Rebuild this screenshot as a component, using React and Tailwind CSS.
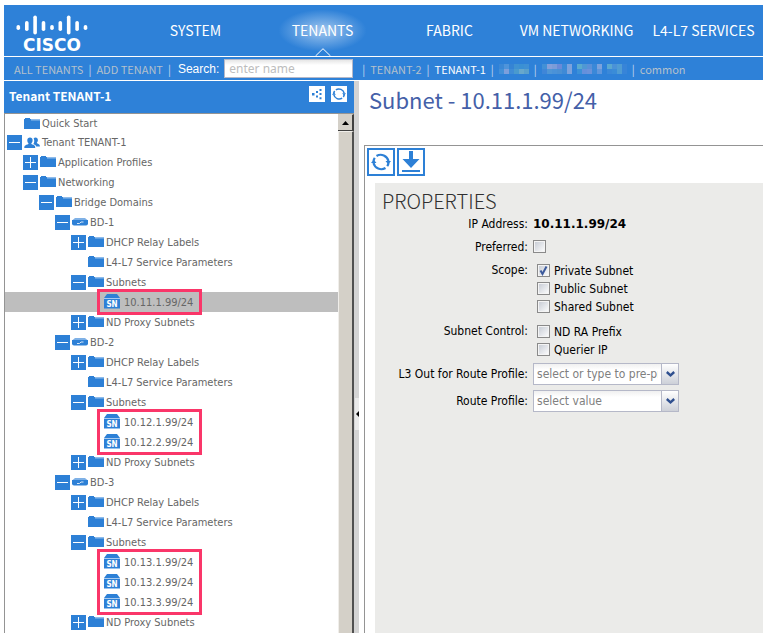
const CENTERED = "flex shrink-0 items-center justify-center";

function Folder() {
  return (
    <svg className="h-4 w-4 shrink-0" viewBox="0 0 16 16" aria-hidden="true" shapeRendering="crispEdges">
      <path d="M7 3h9v2H0V3z" fill="#8fbbea" />
      <path d="M1 2h5l1 2h9v9H0V3z" fill="#2d80d6" />
      <path d="M7 4h9v1H7z" fill="#5f9fe0" />
    </svg>
  );
}

function Users() {
  return (
    <svg className="h-4 w-4 shrink-0" viewBox="0 0 16 16" fill="#2d80d6" aria-hidden="true">
      <path d="M6 2.5c1.600 0 2.600 1.100 2.600 2.700 0 1.300-.5 2.300-1.200 2.900v.9c1 .6 3.100 1 3.600 2.100.2.500.2 1.400.2 1.900H.3c0-.6 0-1.400.3-1.900.6-1.100 2.800-1.500 3.800-2.100v-.9C3.700 7.500 3.300 6.500 3.300 5.200 3.300 3.600 4.400 2.500 6 2.500z" />
      <path d="M11.600 2.500c1.400 0 2.300 1 2.300 2.400 0 1.100-.4 2-1 2.500v.8c.8.500 2.300.8 2.700 1.700.2.400.3 1.100.3 1.600h-3.700c-.3-1.300-1.800-1.900-2.900-2.400.8-1.100 1-2.300.9-3.900-.1-.8-.3-1.300-.6-1.800.5-.6 1.200-.9 2-.9z" />
    </svg>
  );
}

function Bridge() {
  return (
    <svg className="h-4 w-4 shrink-0" viewBox="0 0 16 16" aria-hidden="true">
      <path d="M3 4h10l3 2.500H0z" fill="#7fb1e6" />
      <path d="M0 6h16v3.500a2 2 0 0 1-2 2H2a2 2 0 0 1-2-2z" fill="#2d80d6" />
      <path d="M5 9.500h2.500l1.500-1.500h2.500" stroke="#d5e6f8" strokeWidth="1" fill="none" />
    </svg>
  );
}

function SubnetIcon() {
  return (
    <svg className="h-4 w-4 shrink-0" viewBox="0 0 16 16" aria-hidden="true">
      <path d="M3 0h10l3 4H0z" fill="#2d80d6" />
      <path d="M0 4h16v1H0z" fill="#a8caef" />
      <path d="M0 5h16v9.500H0z" fill="#2d80d6" />
      <text x="8" y="13" textAnchor="middle" fontSize="8" fontWeight="700" fontFamily="DejaVu Sans Condensed, DejaVu Sans, sans-serif" fill="#fff">SN</text>
    </svg>
  );
}

function Refresh({ className }) {
  return (
    <svg className={className} viewBox="0 0 20 20" fill="none" stroke="#2d80d6" strokeWidth="2.200" aria-hidden="true">
      <path d="M5.500 4A8 8 0 0 1 17.500 9" />
      <path d="M14.500 16A8 8 0 0 1 2.500 11" />
      <path d="M3.800 5.800A7.500 7.500 0 0 0 2.500 9M16.200 14.200A7.500 7.500 0 0 0 17.500 11" />
      <path d="M14.500 9H20l-2.700 3.500zM0 11h5.500L2.700 7.500z" fill="#2d80d6" stroke="none" />
    </svg>
  );
}

const LOGO_BARS = [
  [0.5, 10, 5], [9, 6, 10], [17.3, 0.5, 19], [25.7, 6, 10], [34.2, 10, 5],
  [42.5, 6, 10], [50.9, 0.5, 19], [59.3, 6, 10], [67.7, 10, 5],
];

function CiscoLogo() {
  return (
    <a href="#home" className="flex w-[72px] flex-col items-center">
      <svg className="h-5 w-[72px]" viewBox="0 0 72 20" fill="#fff" aria-hidden="true">
        {LOGO_BARS.map(([x, y, h]) => (
          <rect key={x} x={x} y={y} width="3.600" height={h} rx="1.800" />
        ))}
      </svg>
      <span className="font-['DejaVu_Sans',sans-serif] text-[17px] font-bold leading-5">CISCO</span>
    </a>
  );
}

const ICONS = { folder: Folder, users: Users, bridge: Bridge, subnet: SubnetIcon };

const INDENT = [
  "pl-[2px]", "pl-[18px]", "pl-[34px]", "pl-[50px]", "pl-[66px]", "pl-[82px]",
];

function Toggle({ open, label }) {
  return (
    <button
      type="button"
      aria-expanded={open}
      aria-label={label}
      className="h-[15px] w-[15px] shrink-0 bg-[#2d80d6]"
    >
      <svg viewBox="0 0 15 15" stroke="#fff" className="block" aria-hidden="true">
        <path d="M2 7.500h11" />
        {!open && <path d="M7.500 2v11" />}
      </svg>
    </button>
  );
}

function Row({ level, icon = "folder", label, state, selected, short }) {
  const Icon = ICONS[icon];
  return (
    <div
      role="treeitem"
      aria-selected={!!selected}
      className={`flex items-center gap-[2px] whitespace-nowrap ${short ? "h-[19px]" : "h-5"} ${INDENT[level]} ${selected ? "bg-[#bebebe]" : ""}`}
    >
      {state ? (
        <Toggle open={state === "open"} label={`Toggle ${label}`} />
      ) : (
        <span className="w-[15px] shrink-0" />
      )}
      <Icon />
      <span className={`pt-[2px] ${icon === "subnet" ? "pl-[2px]" : ""}`}>{label}</span>
    </div>
  );
}

function Domain({ name, subnets, selected }) {
  return (
    <div role="group">
      <Row level={3} icon="bridge" label={name} state="open" />
      <Row level={4} label="DHCP Relay Labels" state="closed" />
      <Row level={4} label="L4-L7 Service Parameters" />
      <Row level={4} label="Subnets" state="open" />
      <div className="relative">
        {subnets.map((s) => (
          <Row key={s} level={5} icon="subnet" label={s} selected={s === selected} />
        ))}
        <div className="pointer-events-none absolute -bottom-[3px] -top-[3px] left-[92px] w-[105px] border-[3px] border-[#fa3669]" />
      </div>
      <Row level={4} label="ND Proxy Subnets" state="closed" />
    </div>
  );
}

function Check({ id, label, checked }) {
  return (
    <div className="flex h-[18px] items-center gap-[4px]">
      <span className="relative flex h-[13px] w-[13px]">
        <input
          id={id}
          type="checkbox"
          defaultChecked={checked}
          className="peer h-[13px] w-[13px] appearance-none border border-[#8a8a8a] bg-linear-to-br from-[#c4c9d2] to-white shadow-[inset_0_0_0_1px_#f4f4f4]"
        />
        <svg className="pointer-events-none absolute inset-0 hidden peer-checked:block" viewBox="0 0 13 13" fill="none" stroke="#3c5a9c" strokeWidth="2" aria-hidden="true">
          <path d="M3.500 6.500l2 3.500 4-7.500" />
        </svg>
      </span>
      {label && <label htmlFor={id} className="pt-px">{label}</label>}
    </div>
  );
}

function Combo({ id, placeholder }) {
  return (
    <div className="flex h-[22px] w-[146px] border border-[#b5b8c8] bg-white">
      <input
        id={id}
        type="text"
        placeholder={placeholder}
        className="w-0 min-w-0 flex-1 bg-linear-to-b from-[#f0f0f0] to-white to-30% px-[3px] outline-none placeholder:text-[#808080]"
      />
      <button
        type="button"
        aria-label="Open list"
        className={`${CENTERED} w-[17px] border-l border-[#b5b8c8] bg-linear-to-b from-white to-[#cdd0d8]`}
      >
        <svg className="h-[6px] w-[9px]" viewBox="0 0 9 6" fill="none" stroke="#2f4f8f" strokeWidth="2.400" aria-hidden="true">
          <path d="M.8 1l3.700 3.300L8.200 1" />
        </svg>
      </button>
    </div>
  );
}

const NAV = ["SYSTEM", "TENANTS", "FABRIC", "VM NETWORKING", "L4-L7 SERVICES"];

const MASK_A = [
  ["#3b88d6", "#4f94da", "#3584d4", "#3f92d2", "#3a90d4", "#3f90d4"],
  ["#4290d8", "#7c9fdc", "#3f8cd6", "#4a9ace", "#68a8cc", "#5aa0cc"],
];
const MASK_B = [
  ["#4290d6", "#849fda", "#7a9cd8", "#6a8ad8", "#3a8ad8", "#7ca2dc", "#2e81d8", "#5aaace", "#4f98d4", "#5a90d8", "#3a88d8", "#7ca2dc", "#2e81d8", "#5aa8d0", "#4a92d8", "#4f9cd4", "#3784d8"],
  ["#3f86d8", "#4f96d6", "#4a92d8", "#4a90d4", "#3f8ad6", "#7ca2dc", "#2e81d8", "#3a90d8", "#6490dc", "#6a92da", "#3a88d8", "#5f96dc", "#2e81d8", "#3a88d8", "#3a8cd8", "#4f9cd4", "#3784d8"],
];

function Masked({ rows }) {
  return (
    <span className="flex flex-col" aria-hidden="true">
      {rows.map((colors, r) => (
        <span key={r} className="flex">
          {colors.map((c, i) => (
            <span key={i} className="h-[5px] w-[5px]" style={{ backgroundColor: c }} />
          ))}
        </span>
      ))}
    </span>
  );
}

function Bar() {
  return <span className="text-[#c6d9ee]">|</span>;
}

export default function App() {
  return (
    <div className="flex h-screen flex-col overflow-hidden bg-white pl-1 pt-[5px] font-['DejaVu_Sans_Condensed','DejaVu_Sans',sans-serif] text-[11px] text-black">
      <header className="shrink-0 text-white">
        <div className="flex h-[51px] overflow-hidden bg-[#2e81d8]">
          <div className="w-32 shrink-0 pl-3 pt-[10px]">
            <CiscoLogo />
          </div>
          <nav className="flex font-['Noto_Sans_CJK_SC',sans-serif] text-[14px]">
            {NAV.map((n) => (
              <a
                key={n}
                href="#nav"
                className={`relative flex w-[127px] shrink-0 items-center justify-center whitespace-nowrap pb-px leading-5 ${n === "TENANTS" ? "bg-[radial-gradient(44px_21px_at_center,#a0c6ee,#2e81d8)]" : ""}`}
              >
                {n}
                {n === "TENANTS" && (
                  <svg className="absolute bottom-0 h-2 w-4" viewBox="0 0 16 8" fill="none" stroke="#fff" aria-hidden="true">
                    <path d="M.5 8L8 .7 15.500 8" />
                  </svg>
                )}
              </a>
            ))}
          </nav>
        </div>
        <div className="mt-px flex h-[23px] items-center gap-[5px] overflow-hidden whitespace-nowrap bg-[#2e81d8] pl-[10px] font-['Noto_Sans_CJK_SC',sans-serif] text-[11px] leading-4 text-[#b4c0cc]">
          <a href="#all">ALL TENANTS</a>
          <Bar />
          <a href="#add">ADD TENANT</a>
          <Bar />
          <label htmlFor="search" className="pl-[2px] font-['Liberation_Sans',sans-serif] text-[12px] text-white">
            Search:
          </label>
          <input
            id="search"
            type="text"
            placeholder="enter name"
            className="mr-1 h-[19px] w-[129px] shrink-0 border border-[#b5b8c8] bg-linear-to-b from-[#e6e6e6] to-white to-30% px-1 font-['Noto_Sans',sans-serif] text-[12px] text-black outline-none placeholder:text-[#bdbdbd]"
          />
          <Bar />
          <a href="#t2">TENANT-2</a>
          <Bar />
          <a href="#t1" className="text-white">TENANT-1</a>
          <Bar />
          <Masked rows={MASK_A} />
          <Bar />
          <Masked rows={MASK_B} />
          <Bar />
          <a href="#common">common</a>
        </div>
      </header>

      <div className="mt-px flex min-h-0 flex-1">
        <aside className="flex w-[350px] shrink-0 flex-col">
          <div className="flex h-8 shrink-0 items-center bg-[#2e81d8] pb-[2px] pl-[5px] pr-[7px]">
            <h2 className="flex-1 font-['Noto_Sans_CJK_SC',sans-serif] text-[12px] font-bold leading-5 text-white">
              Tenant TENANT-1
            </h2>
            <div className="flex gap-[6px] pb-1">
              <button type="button" aria-label="Topology" className={`${CENTERED} h-4 w-4 bg-white`}>
                <svg className="h-3 w-3" viewBox="0 0 12 12" fill="#2d80d6" aria-hidden="true">
                  <path d="M1 5h2.500v2.500H1zM5 3h2v2H5zM5 7.500h2v2H5zM8.500 1h2v2h-2zM8.500 5h2v2h-2zM8.500 9.300h2v2h-2z" />
                </svg>
              </button>
              <button type="button" aria-label="Refresh tree" className={`${CENTERED} h-4 w-4 bg-white`}>
                <Refresh className="h-[14px] w-[14px]" />
              </button>
            </div>
          </div>
          <div className="flex min-h-0 flex-1 border-l border-t border-[#949494]">
            <div role="tree" aria-label="Tenant objects" className="min-w-0 flex-1 overflow-hidden text-[#666666]">
              <Row level={0} label="Quick Start" short />
              <Row level={0} icon="users" label="Tenant TENANT-1" state="open" short />
              <Row level={1} label="Application Profiles" state="closed" />
              <Row level={1} label="Networking" state="open" />
              <Row level={2} label="Bridge Domains" state="open" />
              <Domain name="BD-1" subnets={["10.11.1.99/24"]} selected="10.11.1.99/24" />
              <Domain name="BD-2" subnets={["10.12.1.99/24", "10.12.2.99/24"]} />
              <Domain name="BD-3" subnets={["10.13.1.99/24", "10.13.2.99/24", "10.13.3.99/24"]} />
            </div>
            <div className="flex w-4 shrink-0 flex-col">
              <button type="button" aria-label="Scroll up" className={`${CENTERED} h-[17px] border-b border-r-2 border-t border-[#404040] border-t-[#d4d0c8] bg-[#d4d0c8]`}>
                <svg className="h-1 w-[7px]" viewBox="0 0 7 4" aria-hidden="true">
                  <path d="M0 4L3.500 0 7 4z" />
                </svg>
              </button>
              <div className="flex-1 border-l border-r-2 border-t border-[#f0eeea] border-r-[#505050] bg-[#d4d0c8]" />
            </div>
          </div>
        </aside>

        <div className="flex w-[5px] shrink-0 flex-col items-end justify-center bg-[#d4d4d4] pt-[114px]">
          <button type="button" aria-label="Collapse panel" className={`${CENTERED} h-8 w-1 bg-[#e9e9e9]`}>
            <svg className="h-[6px] w-[3px]" viewBox="0 0 3 6" aria-hidden="true">
              <path d="M3 0v6L0 3z" />
            </svg>
          </button>
        </div>

        <main className="flex min-w-0 flex-1 flex-col pl-[5px]">
          <h1 className="h-16 shrink-0 pl-[5px] pt-[2px] font-['Noto_Sans_CJK_SC',sans-serif] text-[22px] leading-8 text-[#4460a8]">
            Subnet - 10.11.1.99/24
          </h1>
          <div className="flex min-h-0 flex-1 flex-col border-l border-t border-[#949494] pl-[2px] pt-[2px]">
            <div className="flex shrink-0 gap-[2px]">
              <button type="button" aria-label="Refresh" className={`${CENTERED} h-7 w-7 border-2 border-[#2d80d6]`}>
                <Refresh className="h-5 w-5" />
              </button>
              <button type="button" aria-label="Download" className={`${CENTERED} h-7 w-7 border-2 border-[#2d80d6]`}>
                <svg className="h-6 w-6" viewBox="0 0 24 24" fill="#2d80d6" aria-hidden="true">
                  <path d="M10 1h4v8h6.500L12 18 3.500 9H10zM3 20h18v2H3z" />
                </svg>
              </button>
            </div>
            <section className="ml-2 mt-[7px] flex-1 bg-[#ebebe9] pl-[7px] pt-[6px] text-[12px] leading-[18px]">
              <h2 className="font-['Noto_Sans_CJK_SC',sans-serif] text-[20px] font-light leading-6 text-[#303030]">
                PROPERTIES
              </h2>
              <div className="grid grid-cols-[146px_1fr] items-start gap-x-[5px]">
                <span className="text-right leading-[22px]">IP Address:</span>
                <strong className="font-['DejaVu_Sans',sans-serif] leading-[22px]">10.11.1.99/24</strong>
                <label htmlFor="preferred" className="mt-px text-right leading-[22px]">Preferred:</label>
                <div className="mt-[2px]"><Check id="preferred" /></div>
                <span className="mt-px text-right leading-[22px]">Scope:</span>
                <div className="ml-1 mt-[3px]">
                  <Check id="private" label="Private Subnet" checked />
                  <Check id="public" label="Public Subnet" />
                  <Check id="shared" label="Shared Subnet" />
                </div>
                <span className="mt-[5px] text-right leading-[22px]">Subnet Control:</span>
                <div className="ml-1 mt-[7px]">
                  <Check id="ndra" label="ND RA Prefix" />
                  <Check id="querier" label="Querier IP" />
                </div>
                <label htmlFor="l3out" className="mt-[5px] whitespace-nowrap text-right leading-[22px]">L3 Out for Route Profile:</label>
                <div className="mt-[5px]"><Combo id="l3out" placeholder="select or type to pre-provision" /></div>
                <label htmlFor="route" className="mt-[5px] text-right leading-[22px]">Route Profile:</label>
                <div className="mt-[5px]"><Combo id="route" placeholder="select value" /></div>
              </div>
            </section>
          </div>
        </main>
      </div>
    </div>
  );
}
